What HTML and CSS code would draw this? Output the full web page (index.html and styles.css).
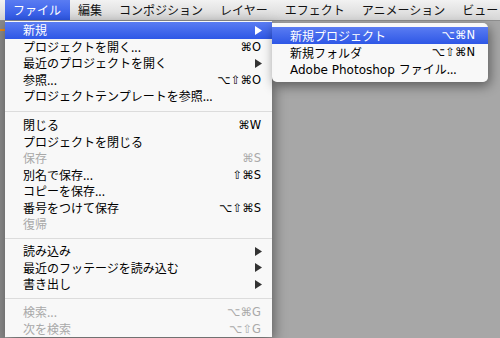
FILE: index.html
```html
<!DOCTYPE html>
<html lang="ja">
<head>
  <meta charset="UTF-8">
  <title>ファイル メニュー</title>
  <link rel="stylesheet" href="styles.css">
</head>
<body>
  <div class="menubar">
    <span class="mb-item active">ファイル</span>
    <span class="mb-item">編集</span>
    <span class="mb-item">コンポジション</span>
    <span class="mb-item">レイヤー</span>
    <span class="mb-item">エフェクト</span>
    <span class="mb-item">アニメーション</span>
    <span class="mb-item">ビュー</span>
  </div>

  <div class="desktop">
    <div class="side-strip"></div>

    <div class="menu">
      <div class="row selected"><span>新規</span><svg class="arrow" width="7" height="9" viewBox="0 0 7 9"><polygon points="0,0 7,4.5 0,9"/></svg></div>
      <div class="row"><span>プロジェクトを開く...</span><span class="key">⌘O</span></div>
      <div class="row"><span>最近のプロジェクトを開く</span><svg class="arrow" width="7" height="9" viewBox="0 0 7 9"><polygon points="0,0 7,4.5 0,9"/></svg></div>
      <div class="row"><span>参照...</span><span class="key">⌥⇧⌘O</span></div>
      <div class="row"><span>プロジェクトテンプレートを参照...</span></div>
      <div class="sep sep-a"></div>
      <div class="row"><span>閉じる</span><span class="key">⌘W</span></div>
      <div class="row"><span>プロジェクトを閉じる</span></div>
      <div class="row disabled"><span>保存</span><span class="key">⌘S</span></div>
      <div class="row"><span>別名で保存...</span><span class="key">⇧⌘S</span></div>
      <div class="row"><span>コピーを保存...</span></div>
      <div class="row"><span>番号をつけて保存</span><span class="key">⌥⇧⌘S</span></div>
      <div class="row disabled"><span>復帰</span></div>
      <div class="sep sep-b"></div>
      <div class="row"><span>読み込み</span><svg class="arrow" width="7" height="9" viewBox="0 0 7 9"><polygon points="0,0 7,4.5 0,9"/></svg></div>
      <div class="row"><span>最近のフッテージを読み込む</span><svg class="arrow" width="7" height="9" viewBox="0 0 7 9"><polygon points="0,0 7,4.5 0,9"/></svg></div>
      <div class="row"><span>書き出し</span><svg class="arrow" width="7" height="9" viewBox="0 0 7 9"><polygon points="0,0 7,4.5 0,9"/></svg></div>
      <div class="sep sep-c"></div>
      <div class="row disabled"><span>検索...</span><span class="key">⌥⌘G</span></div>
      <div class="row disabled"><span>次を検索</span><span class="key">⌥⇧G</span></div>
    </div>

    <div class="submenu">
      <div class="row selected"><span>新規プロジェクト</span><span class="key">⌥⌘N</span></div>
      <div class="row"><span>新規フォルダ</span><span class="key">⌥⇧⌘N</span></div>
      <div class="row"><span><span class="latin">Adobe Photoshop </span>ファイル...</span></div>
    </div>
  </div>
</body>
</html>
```

FILE: styles.css
```css
body {
  margin: 0;
  width: 500px;
  height: 338px;
  overflow: hidden;
  font-family: "Noto Sans CJK JP", "DejaVu Sans", sans-serif;
  font-size: 12px;
  color: #000;
  background-color: #a7a7a7;
}
.menubar {
  display: flex;
  height: 20px;
  padding-left: 4.5px;
  overflow: hidden;
  background: linear-gradient(#f2f2f2, #d6d6d6);
  border-bottom: 1px solid #8e8e8e;
}
.mb-item {
  flex-shrink: 0;
  padding: 0 8.5px;
  line-height: 20px;
  white-space: nowrap;
  color: #111;
}
.mb-item.active {
  color: #fff;
  background: linear-gradient(#5a7cf2, #2e57e6);
}
.desktop {
  position: relative;
  height: 317px;
  background-color: #a7a7a7;
}
.side-strip {
  width: 5px;
  height: 100%;
  background: linear-gradient(#8a8a8a 0, #8a8a8a 8px, #e98a1a 8px, #e98a1a 10px, #8a8a8a 10px);
}
.menu {
  position: absolute;
  left: 5px;
  top: 0;
  width: 267px;
  padding-top: 1px;
  background-color: rgba(250, 250, 250, 0.98);
  box-shadow: 2px 4px 12px rgba(0, 0, 0, 0.45);
}
.row {
  display: flex;
  justify-content: space-between;
  align-items: center;
  height: 16.5px;
  line-height: 16.5px;
  padding: 0 11px 0 18px;
  white-space: nowrap;
}
.row.selected {
  color: #fff;
  background: linear-gradient(#5a7cf2, #2e57e6);
}
.row.disabled {
  color: #a9a9a9;
}
.key {
  font-family: "DejaVu Sans", sans-serif;
  font-size: 11.5px;
}
.arrow {
  fill: #333;
  margin-right: -1px;
}
.selected .arrow {
  fill: #fff;
}
.sep {
  height: 1px;
  background-color: #dcdcdc;
}
.sep-a {
  margin: 6px 0 5.5px;
}
.sep-b {
  margin: 5px 0 4.5px;
}
.sep-c {
  margin: 5.5px 0 5px;
}
.submenu {
  position: absolute;
  left: 272px;
  top: 2px;
  width: 216px;
  padding: 4px 0;
  border-radius: 0 5px 5px 5px;
  background-color: rgba(250, 250, 250, 0.98);
  box-shadow: 2px 4px 12px rgba(0, 0, 0, 0.45);
}
.submenu .row {
  height: 17px;
  line-height: 17px;
  padding: 0 13px 0 18px;
}
.latin {
  font-family: "DejaVu Sans", sans-serif;
}
```
